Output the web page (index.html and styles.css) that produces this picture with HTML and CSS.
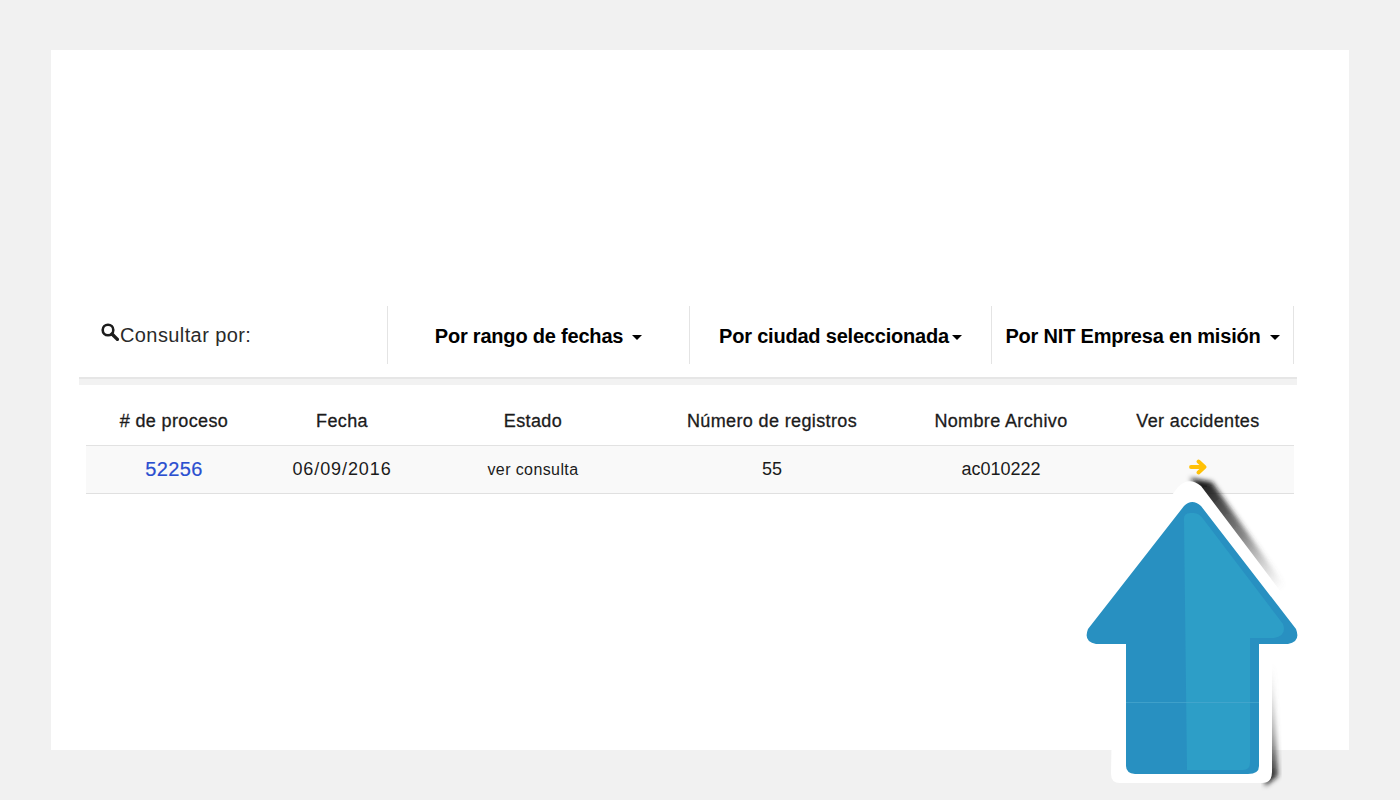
FILE: index.html
```html
<!DOCTYPE html>
<html lang="es">
<head>
<meta charset="utf-8">
<title>Consulta</title>
<link rel="stylesheet" href="styles.css">
</head>
<body>
<main class="card">
  <nav class="filters">
    <div class="filter filter-label">
      <svg class="search" viewBox="0 0 18 18" width="18" height="18"><circle cx="7" cy="7" r="5.3" fill="none" stroke="#1c1c1c" stroke-width="2.6"/><path d="M11 11 16.400 16.400" stroke="#1c1c1c" stroke-width="3.4" stroke-linecap="round"/></svg>
      <span>Consultar por:</span>
    </div>
    <div class="filter filter-menu"><b>Por rango de fechas</b><i class="caret caret-gap"></i></div>
    <div class="filter filter-menu"><b>Por ciudad seleccionada</b><i class="caret"></i></div>
    <div class="filter filter-menu"><b>Por NIT Empresa en misión</b><i class="caret caret-gap"></i></div>
  </nav>
  <div class="divider"></div>
  <section class="results">
    <div class="row head">
      <div># de proceso</div><div>Fecha</div><div>Estado</div><div>Número de registros</div><div>Nombre Archivo</div><div>Ver accidentes</div>
    </div>
    <div class="row item">
      <div class="id">52256</div><div class="date">06/09/2016</div><div class="state">ver consulta</div><div>55</div><div>ac010222</div>
      <div><svg class="go" viewBox="0 0 18 16" width="18" height="16"><path d="M2 8H15M9.5 2.500 15.500 8 9.500 13.500" fill="none" stroke="#ffc107" stroke-width="3.800" stroke-linecap="round" stroke-linejoin="round"/></svg></div>
    </div>
  </section>
</main>
<svg class="big-arrow" viewBox="0 0 260 350" width="260" height="350">
  <defs>
    <filter id="blur" x="-30%" y="-30%" width="160%" height="160%"><feGaussianBlur stdDeviation="2.500"/></filter>
    <linearGradient id="fadeTop" gradientUnits="userSpaceOnUse" x1="146" y1="32" x2="222" y2="138"><stop offset="0" stop-color="#111" stop-opacity=".95"/><stop offset=".5" stop-color="#333" stop-opacity=".6"/><stop offset="1" stop-color="#777" stop-opacity="0"/></linearGradient>
    <linearGradient id="fadeBottom" gradientUnits="userSpaceOnUse" x1="216" y1="330" x2="214" y2="215"><stop offset="0" stop-color="#111" stop-opacity=".9"/><stop offset=".4" stop-color="#444" stop-opacity=".45"/><stop offset="1" stop-color="#999" stop-opacity="0"/></linearGradient>
  </defs>
  <path d="M130 28 152 32 226 138 210 145Z" fill="url(#fadeTop)" filter="url(#blur)"/>
  <path d="M205 215 213 215 218 326 205 336Z" fill="url(#fadeBottom)" filter="url(#blur)"/>
  <path d="M118 37Q129 26 141 36L221 142 212 210V322Q212 333 202 333H60Q51 333 51 324L53 210H18Q2 206 7 190L14 176Z" fill="#fff"/>
  <path d="M124 56Q132 48 141 56L236 179Q241 192 228 194H199V316Q199 324 188 324H75Q66 323 66 316V194H36Q23 192 28 179Z" fill="#2890c1"/>
  <path d="M124 71Q123 62 132 63 139 62 144 70L223 174Q227 186 214 188H190V312Q190 320 183 320H127Z" fill="#2d9ec7"/>
  <path d="M66 252.500H199" stroke="#4aa8cf" stroke-width="1" opacity=".7"/>
</svg>
</body>
</html>
```
FILE: styles.css
```css
* { box-sizing: border-box; }
html, body { margin: 0; height: 100%; }
body {
  background: #f1f1f1;
  color: #1b1b1b;
  font-family: "Liberation Sans", Arial, sans-serif;
  padding: 50px 51px;
  position: relative;
  overflow: hidden;
}
.card {
  background: #fff;
  height: 700px;
  padding: 256px 52px 0 28px;
}
.filters {
  display: grid;
  grid-template-columns: 309px 302px 302px 302px;
  height: 58px;
}
.filter {
  border-right: 1px solid #e4e4e4;
  display: flex;
  align-items: center;
}
.filter-label {
  padding: 0 0 0 22px;
  font-size: 20px;
  letter-spacing: .4px;
  color: #2a2a2a;
}
.search { margin-top: -6px; flex: none; margin-right: 1px; }
.filter-menu {
  justify-content: center;
  font-size: 20px;
  color: #000;
  padding-top: 2px;
  white-space: nowrap;
}
.filter-menu b { letter-spacing: -.2px; }
.caret {
  display: inline-block;
  border-top: 5px solid #000;
  border-left: 5px solid transparent;
  border-right: 5px solid transparent;
  margin-left: 3px;
  margin-top: 2px;
}
.caret-gap { margin-left: 9px; }
.divider {
  height: 8px;
  margin-top: 13px;
  background: #f2f2f2;
  border-top: 2px solid #e6e6e6;
}
.results { margin: 0 3px 0 7px; padding-top: 16px; }
.row {
  display: grid;
  grid-template-columns: 176px 160px 222px 256px 202px 192px;
  text-align: center;
  align-items: center;
}
.head {
  height: 45px;
  font-size: 18px;
  letter-spacing: .37px;
  border-bottom: 1px solid #e2e2e2;
  padding-bottom: 4px;
  -webkit-text-stroke: .3px #1b1b1b;
}
.item {
  height: 48px;
  background: #f9f9f9;
  border-bottom: 1px solid #e0e0e0;
  font-size: 18px;
}
.id { color: #2a4fd0; font-size: 20px; letter-spacing: .4px; -webkit-text-stroke: .2px #2a4fd0; }
.date { letter-spacing: .9px; }
.state { font-size: 16px; letter-spacing: .4px; }
.go { display: block; margin: -5px auto 0; }
.big-arrow { position: absolute; left: 1060px; top: 450px; }
```
